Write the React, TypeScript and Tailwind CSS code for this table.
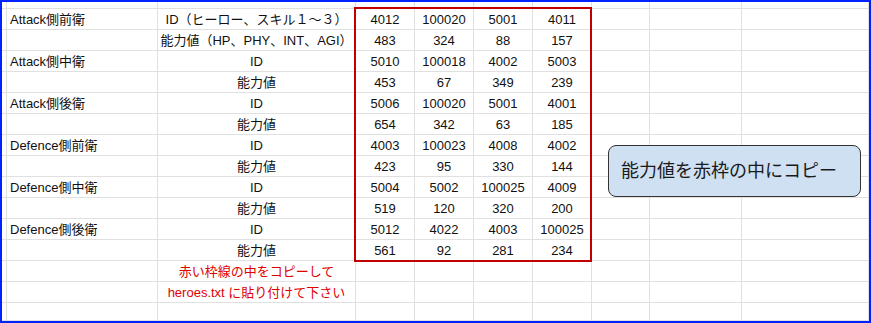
const rows: string[][] = [
  ["Attack側前衛", "ID（ヒーロー、スキル１～３）", "4012", "100020", "5001", "4011"],
  ["", "能力値（HP、PHY、INT、AGI）", "483", "324", "88", "157"],
  ["Attack側中衛", "ID", "5010", "100018", "4002", "5003"],
  ["", "能力値", "453", "67", "349", "239"],
  ["Attack側後衛", "ID", "5006", "100020", "5001", "4001"],
  ["", "能力値", "654", "342", "63", "185"],
  ["Defence側前衛", "ID", "4003", "100023", "4008", "4002"],
  ["", "能力値", "423", "95", "330", "144"],
  ["Defence側中衛", "ID", "5004", "5002", "100025", "4009"],
  ["", "能力値", "519", "120", "320", "200"],
  ["Defence側後衛", "ID", "5012", "4022", "4003", "100025"],
  ["", "能力値", "561", "92", "281", "234"],
];

const notes = ["赤い枠線の中をコピーして", "heroes.txt に貼り付けて下さい", ""];

const cell = "border-r border-b border-[#e0e0e0] flex items-center pt-[2px] whitespace-nowrap overflow-hidden";

const BlankCells = ({ from }: { from: number }) => (
  <>
    {Array.from({ length: 10 - from }).map((_, i) => (
      <div key={i} className={cell} />
    ))}
  </>
);

const App = () => {
  return (
    <div className="w-[871px] h-[323px] border-2 border-[#0022ff] bg-white overflow-hidden">
      <div
        className="relative w-full h-full grid grid-cols-[5px_151px_198px_59px_59px_59px_59px_58px_92px_1fr] grid-rows-[7px_repeat(14,21px)_1fr] text-[13px] text-[#111]"
        style={{ fontFamily: '"Liberation Sans", "Noto Sans CJK JP", sans-serif' }}
      >
        {/* partial header row */}
        <BlankCells from={0} />

        {rows.map((r, i) => (
          <div key={i} className="contents">
            <div className={cell} />
            <div className={`${cell} pl-[3px]`}>{r[0]}</div>
            <div className={`${cell} justify-center`}>{r[1]}</div>
            {r.slice(2).map((n, j) => (
              <div key={j} className={`${cell} justify-center`}>{n}</div>
            ))}
            <BlankCells from={7} />
          </div>
        ))}

        {notes.map((t, i) => (
          <div key={`n${i}`} className="contents">
            <div className={cell} />
            <div className={cell} />
            <div className={`${cell} justify-center text-[#e00000]`}>{t}</div>
            <BlankCells from={3} />
          </div>
        ))}

        {/* red copy frame */}
        <div className="absolute left-[352px] top-[5px] w-[238px] h-[255px] border-2 border-[#c00000] pointer-events-none" />

        {/* callout */}
        <div className="absolute left-[606px] top-[143px] w-[253px] h-[52px] rounded-[8px] border border-[#333] bg-[#cfe0f2] flex items-center pl-[12px] text-[18px] text-[#1a1a1a]">
          能力値を赤枠の中にコピー
        </div>
      </div>
    </div>
  );
};

export default App;
